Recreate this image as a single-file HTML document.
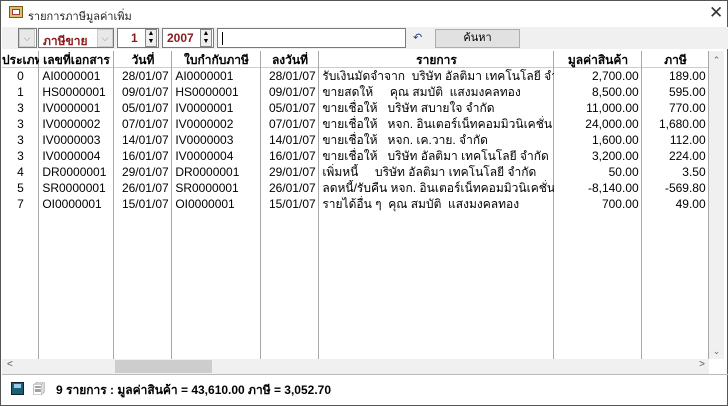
<!DOCTYPE html>
<html><head><meta charset="utf-8"><style>
*{box-sizing:border-box;margin:0;padding:0}
body{width:728px;height:406px;overflow:hidden;background:#fff;font-family:"Liberation Sans","DejaVu Sans",sans-serif;font-size:12px;color:#000;position:relative}
.win{position:absolute;left:0;top:0;width:728px;height:406px;border:1px solid #555;background:#fff}
.abs{position:absolute}
.title{left:8px;top:6px;font-size:11px;color:#222}
.tb{top:26px;height:22px;background:#f0f0f0}
.box{position:absolute;background:#fff;border:1px solid #7a7a7a;height:20px;top:27px}
.dd{position:absolute;top:28px;width:16px;height:18px;background:#e8e8e8;border:1px solid #ccc;font-size:9px;color:#888;text-align:center;line-height:16px}
.red{color:#8b1a1a;font-weight:bold}
.spin{position:absolute;top:28px;width:12px;height:18px;border:1px solid #888;background:#eee;font-size:7px;line-height:8px;text-align:center}
.hdr{top:50px;left:1px;height:17px;width:707px;background:#fff;border-bottom:1px solid #ccc}
.col{position:absolute;top:50px;height:308px;border-right:1px solid #a8a8a8}
.cell{position:absolute;white-space:nowrap;height:16px;line-height:16px;overflow:hidden}
.hc{font-weight:bold;text-align:center;top:51px}
td{padding:0;height:16px;overflow:hidden;white-space:nowrap}
</style></head><body><div class="win">
<div class="abs" style="left:8px;top:5px;width:14px;height:12px;border:1px solid #7a5a20;background:#d8c070"><div style="margin:2px;height:6px;background:#fff;border:1px solid #a33"></div></div>
<div class="abs title" style="left:27px">รายการภาษีมูลค่าเพิ่ม</div>
<div class="abs" style="left:708px;top:2px;font-size:17px;color:#333">✕</div>
<div class="abs tb" style="left:1px;width:726px"></div>
<div class="box" style="left:17px;width:19px"></div><div class="dd" style="left:18px">⌵</div>
<div class="box" style="left:37px;width:76px"></div><div class="abs red" style="left:42px;top:31px">ภาษีขาย</div><div class="dd" style="left:96px">⌵</div>
<div class="box" style="left:116px;width:42px"></div><div class="abs red" style="left:130px;top:30px">1</div><div class="spin" style="left:144px">▲<br>▼</div>
<div class="box" style="left:161px;width:52px"></div><div class="abs red" style="left:166px;top:30px">2007</div><div class="spin" style="left:199px">▲<br>▼</div>
<div class="box" style="left:216px;width:189px"></div><div class="abs" style="left:221px;top:31px;width:1px;height:13px;background:#000"></div>
<div class="abs" style="left:412px;top:30px;color:#1a3a9a;font-size:11px">↶</div>
<div class="abs" style="left:434px;top:28px;width:85px;height:19px;background:#e1e1e1;border:1px solid #adadad;text-align:center;line-height:17px;font-size:11px">ค้นหา</div>
<div class="abs hdr"></div>
<div class="col" style="left:1px;width:37px"></div>
<div class="col" style="left:38px;width:75px"></div>
<div class="col" style="left:113px;width:58px"></div>
<div class="col" style="left:171px;width:89px"></div>
<div class="col" style="left:260px;width:58px"></div>
<div class="col" style="left:318px;width:235px"></div>
<div class="col" style="left:553px;width:88px"></div>
<div class="col" style="left:641px;width:67px"></div>
<div class="cell hc" style="left:1px;width:37px">ประเภท</div>
<div class="cell hc" style="left:38px;width:75px">เลขที่เอกสาร</div>
<div class="cell hc" style="left:113px;width:58px">วันที่</div>
<div class="cell hc" style="left:171px;width:89px">ใบกำกับภาษี</div>
<div class="cell hc" style="left:260px;width:58px">ลงวันที่</div>
<div class="cell hc" style="left:318px;width:235px">รายการ</div>
<div class="cell hc" style="left:553px;width:88px">มูลค่าสินค้า</div>
<div class="cell hc" style="left:641px;width:67px">ภาษี</div>
<div class="abs" style="left:708px;top:50px;width:15px;height:308px;background:#f0f0f0"><div style="text-align:center;font-size:9px;color:#666;margin-top:4px">⌃</div><div style="position:absolute;bottom:2px;width:15px;text-align:center;font-size:9px;color:#666">⌄</div></div>
<div class="abs" style="left:1px;top:358px;width:707px;height:15px;background:#f0f0f0"><div style="position:absolute;left:5px;top:0;font-size:10px;color:#555">&lt;</div><div style="position:absolute;left:113px;top:1px;width:97px;height:13px;background:#cdcdcd"></div><div style="position:absolute;right:4px;top:0;font-size:10px;color:#555">&gt;</div></div>
<div class="abs" style="left:1px;top:373px;width:726px;height:1px;background:#bbb"></div>
<div class="abs" style="left:10px;top:381px;width:13px;height:13px;background:#1a6070;border:1px solid #123"><div style="margin:1px 2px;height:4px;background:#9ce"></div></div>
<div class="abs" style="left:32px;top:379px;font-size:12px;color:#444">🗐</div>
<div class="abs" style="left:55px;top:380px;font-weight:bold;font-size:12px">9 รายการ : มูลค่าสินค้า = 43,610.00 ภาษี = 3,052.70</div>
<table style="border-collapse:collapse;font-size:12px;position:absolute;left:1px;top:67px;width:707px;table-layout:fixed;line-height:16px">
<colgroup><col style="width:37px"><col style="width:75px"><col style="width:58px"><col style="width:89px"><col style="width:58px"><col style="width:235px"><col style="width:88px"><col style="width:67px"></colgroup>
<tbody>
<tr><td align=center>0</td><td>&nbsp;AI0000001</td><td align=right>28/01/07&nbsp;</td><td>&nbsp;AI0000001</td><td align=right>28/01/07&nbsp;</td><td>&nbsp;รับเงินมัดจำจาก&nbsp; บริษัท อัลติมา เทคโนโลยี จำกัด</td><td align=right>2,700.00&nbsp;</td><td align=right>189.00&nbsp;</td></tr>
<tr><td align=center>1</td><td>&nbsp;HS0000001</td><td align=right>09/01/07&nbsp;</td><td>&nbsp;HS0000001</td><td align=right>09/01/07&nbsp;</td><td>&nbsp;ขายสดให้&nbsp;&nbsp;&nbsp;&nbsp; คุณ สมบัติ&nbsp; แสงมงคลทอง</td><td align=right>8,500.00&nbsp;</td><td align=right>595.00&nbsp;</td></tr>
<tr><td align=center>3</td><td>&nbsp;IV0000001</td><td align=right>05/01/07&nbsp;</td><td>&nbsp;IV0000001</td><td align=right>05/01/07&nbsp;</td><td>&nbsp;ขายเชื่อให้&nbsp;&nbsp; บริษัท สบายใจ จำกัด</td><td align=right>11,000.00&nbsp;</td><td align=right>770.00&nbsp;</td></tr>
<tr><td align=center>3</td><td>&nbsp;IV0000002</td><td align=right>07/01/07&nbsp;</td><td>&nbsp;IV0000002</td><td align=right>07/01/07&nbsp;</td><td>&nbsp;ขายเชื่อให้&nbsp;&nbsp; หจก. อินเตอร์เน็ทคอมมิวนิเคชั่น</td><td align=right>24,000.00&nbsp;</td><td align=right>1,680.00&nbsp;</td></tr>
<tr><td align=center>3</td><td>&nbsp;IV0000003</td><td align=right>14/01/07&nbsp;</td><td>&nbsp;IV0000003</td><td align=right>14/01/07&nbsp;</td><td>&nbsp;ขายเชื่อให้&nbsp;&nbsp; หจก. เค.วาย. จำกัด</td><td align=right>1,600.00&nbsp;</td><td align=right>112.00&nbsp;</td></tr>
<tr><td align=center>3</td><td>&nbsp;IV0000004</td><td align=right>16/01/07&nbsp;</td><td>&nbsp;IV0000004</td><td align=right>16/01/07&nbsp;</td><td>&nbsp;ขายเชื่อให้&nbsp;&nbsp; บริษัท อัลติมา เทคโนโลยี จำกัด</td><td align=right>3,200.00&nbsp;</td><td align=right>224.00&nbsp;</td></tr>
<tr><td align=center>4</td><td>&nbsp;DR0000001</td><td align=right>29/01/07&nbsp;</td><td>&nbsp;DR0000001</td><td align=right>29/01/07&nbsp;</td><td>&nbsp;เพิ่มหนี้&nbsp;&nbsp;&nbsp;&nbsp; บริษัท อัลติมา เทคโนโลยี จำกัด</td><td align=right>50.00&nbsp;</td><td align=right>3.50&nbsp;</td></tr>
<tr><td align=center>5</td><td>&nbsp;SR0000001</td><td align=right>26/01/07&nbsp;</td><td>&nbsp;SR0000001</td><td align=right>26/01/07&nbsp;</td><td>&nbsp;ลดหนี้/รับคืน หจก. อินเตอร์เน็ทคอมมิวนิเคชั่น</td><td align=right>-8,140.00&nbsp;</td><td align=right>-569.80&nbsp;</td></tr>
<tr><td align=center>7</td><td>&nbsp;OI0000001</td><td align=right>15/01/07&nbsp;</td><td>&nbsp;OI0000001</td><td align=right>15/01/07&nbsp;</td><td>&nbsp;รายได้อื่น ๆ&nbsp; คุณ สมบัติ&nbsp; แสงมงคลทอง</td><td align=right>700.00&nbsp;</td><td align=right>49.00&nbsp;</td></tr>
</tbody></table>
</div></body></html>
